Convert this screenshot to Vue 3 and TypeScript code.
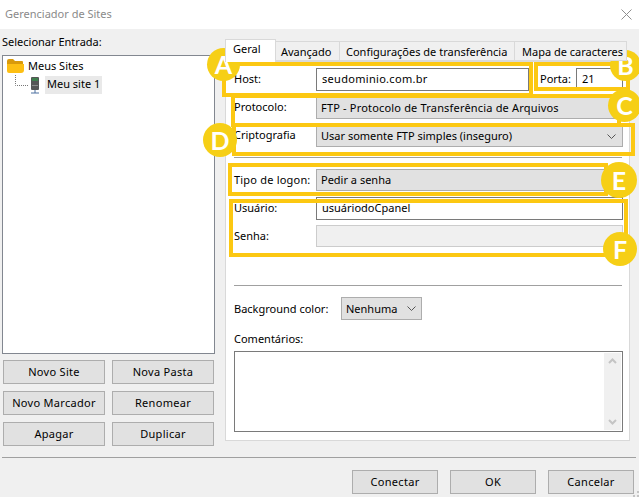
<script setup lang="ts">
const leftButtons: string[] = ['Novo Site', 'Nova Pasta', 'Novo Marcador', 'Renomear', 'Apagar', 'Duplicar']
const footerButtons: string[] = ['Conectar', 'OK', 'Cancelar']
const tabs: string[] = ['Avançado', 'Configurações de transferência', 'Mapa de caracteres']
const marks: string[] = ['a', 'b', 'c', 'd', 'e', 'f']
</script>

<template>
  <div class="app">
    <header class="title">
      <span>Gerenciador de Sites</span>
      <svg class="close" width="11" height="11" viewBox="0 0 11 11"><path d="M.5.5l10 10M10.5.5l-10 10" stroke="#8f8f8f" fill="none" /></svg>
    </header>

    <main class="main">
      <section class="left">
        <div class="left-label">Selecionar Entrada:</div>
        <div class="tree">
          <div class="node root">
            <svg width="17" height="14" viewBox="0 0 17 14">
              <path d="M0 2Q0 0 2 0H6L8 2H15Q16 2 16 3V5H0Z" fill="#d99a0b" />
              <path d="M0 5H17V11Q17 14 14 14H2Q0 14 0 12Z" fill="#fdbf13" />
            </svg>
            <span>Meus Sites</span>
          </div>
          <div class="node child">
            <svg class="dots" width="14" height="11" viewBox="0 0 14 11">
              <path d="M.5 0V10.5H14" stroke="#777" stroke-dasharray="1 1" fill="none" />
            </svg>
            <svg class="server" width="10" height="17" viewBox="0 0 10 17">
              <rect x="1" y="0" width="8" height="13" rx="1" fill="#555" />
              <rect x="2" y="1" width="6" height="3" fill="#3f7f4e" />
              <rect x="2" y="8" width="6" height="1" fill="#8a8a8a" />
              <path d="M5 13V16M1 16H9" stroke="#4a6f9f" fill="none" />
            </svg>
            <span class="selected">Meu site 1</span>
          </div>
        </div>
        <div class="left-buttons">
          <button v-for="b in leftButtons" :key="b" class="btn">{{ b }}</button>
        </div>
      </section>

      <section class="right">
        <div class="tabs">
          <div class="tab active">Geral</div>
          <div v-for="t in tabs" :key="t" class="tab">{{ t }}</div>
        </div>
        <div class="panel">
          <div class="row r1">
            <label class="lab up">Host:</label>
            <div class="field host">seudominio.com.br</div>
            <label class="port-lab up">Porta:</label>
            <div class="field port">21</div>
          </div>
          <div class="row r2">
            <label class="lab up">Protocolo:</label>
            <div class="select grow proto">FTP - Protocolo de Transferência de Arquivos</div>
          </div>
          <div class="row r3">
            <label class="lab up">Criptografia</label>
            <div class="select grow">
              Usar somente FTP simples (inseguro)
              <svg class="chev" width="9" height="5" viewBox="0 0 9 5"><path d="M.5.5l4 4 4-4" stroke="#555" fill="none" /></svg>
            </div>
          </div>
          <div class="sep s1"></div>
          <div class="row r4">
            <label class="lab tipo">Tipo de logon:</label>
            <div class="select grow">Pedir a senha</div>
          </div>
          <div class="row r5">
            <label class="lab up">Usuário:</label>
            <div class="field grow user">usuáriodoCpanel</div>
          </div>
          <div class="row r6">
            <label class="lab">Senha:</label>
            <div class="field grow disabled"></div>
          </div>
          <div class="sep s2"></div>
          <div class="row r7">
            <label class="bg-lab">Background color:</label>
            <div class="select bg-sel">
              Nenhuma
              <svg class="chev" width="9" height="5" viewBox="0 0 9 5"><path d="M.5.5l4 4 4-4" stroke="#555" fill="none" /></svg>
            </div>
          </div>
          <div class="comment-lab">Comentários:</div>
          <div class="textarea">
            <div class="scroll">
              <svg width="9" height="6" viewBox="0 0 9 6"><path d="M1 5l3.5-3.5L8 5" stroke="#c4c4c4" stroke-width="2" fill="none" /></svg>
              <svg width="9" height="6" viewBox="0 0 9 6"><path d="M1 1l3.5 3.5L8 1" stroke="#c4c4c4" stroke-width="2" fill="none" /></svg>
            </div>
          </div>
        </div>
      </section>
    </main>

    <footer class="footer">
      <div class="footer-row">
        <button v-for="b in footerButtons" :key="b" class="btn fbtn">{{ b }}</button>
      </div>
    </footer>

    <div class="box box-a"></div>
    <div class="box box-b"></div>
    <div class="box box-c"></div>
    <div class="box box-d"></div>
    <div class="box box-e"></div>
    <div class="box box-f"></div>
    <div v-for="m in marks" :key="m" class="mark" :class="'mark-' + m">{{ m.toUpperCase() }}</div>
    <svg class="grip" width="6" height="6" viewBox="0 0 6 6"><path d="M4 0h2v2H4zM0 4h2v2H0zM4 4h2v2H4z" fill="#c4c4c4" /></svg>
  </div>
</template>

<style>
html, body { margin: 0; background: #f0f0f0; }
</style>

<style scoped>
.app {
  position: relative;
  width: 639px;
  height: 497px;
  overflow: hidden;
  background: #f0f0f0;
  color: #000;
  font-family: "Noto Sans", "Open Sans", sans-serif;
  font-size: 11px;
  line-height: 16px;
  display: flex;
  flex-direction: column;
}
.title {
  height: 29px;
  flex: none;
  background: #fff;
  color: #8a8a8a;
  display: flex;
  align-items: center;
  justify-content: space-between;
  padding: 0 7px 2px 5px;
  box-sizing: border-box;
}
.close { margin-top: 1px; }
.main { height: 428px; flex: none; display: flex; }
.left { width: 213px; margin-left: 2px; flex: none; }
.left-label { height: 26px; display: flex; align-items: center; }
.tree {
  height: 299px;
  box-sizing: border-box;
  border: 1px solid #828790;
  background: #fff;
  padding-top: 1px;
}
.node { display: flex; align-items: center; height: 18px; }
.root { padding-left: 4px; gap: 4px; margin-bottom: 1px; }
.child { padding-left: 12px; }
.dots { margin-top: -9px; }
.server { margin-left: 1px; margin-right: 5px; }
.selected { background: #e9e9e9; padding: 0 2px 2px; }
.left-buttons {
  display: grid;
  grid-template-columns: 102px 102px;
  grid-auto-rows: 24px;
  gap: 7px;
  margin: 6px 0 0 1px;
}
.btn {
  font: inherit;
  letter-spacing: 0.3px;
  color: #000;
  background: #e1e1e1;
  border: 1px solid #adadad;
  padding: 0;
  margin: 0;
  box-sizing: border-box;
  white-space: nowrap;
}
.right { margin-left: 10px; width: 405px; flex: none; padding-top: 10px; }
.tabs { display: flex; align-items: flex-end; height: 22px; position: relative; z-index: 1; }
.tab {
  height: 20px;
  box-sizing: border-box;
  background: #f0f0f0;
  border: 1px solid #d9d9d9;
  border-left: 0;
  padding: 0 6px;
  white-space: nowrap;
  line-height: 19px;
}
.tab:nth-child(2) { width: 64px; padding-left: 5px; }
.tab:nth-child(3) { width: 175px; }
.tab:nth-child(4) { width: 112px; padding-left: 7px; overflow: hidden; }
.tab.active {
  width: 51px;
  height: 23px;
  margin-bottom: -1px;
  background: #fff;
  border-left: 1px solid #d9d9d9;
  border-bottom: 0;
  padding-left: 7px;
  line-height: 18px;
}
.panel {
  height: 380px;
  box-sizing: border-box;
  background: #fff;
  border: 1px solid #d9d9d9;
  padding: 0 6px 0 8px;
  display: flex;
  flex-direction: column;
}
.row { display: flex; align-items: center; }
.lab { width: 82px; flex: none; }
.up { padding-bottom: 2px; }
.tipo { letter-spacing: 0.2px; }
.grow { flex: 1; }
.field {
  box-sizing: border-box;
  height: 100%;
  background: #fff;
  border: 1px solid #7a7a7a;
  padding-left: 5px;
  display: flex;
  align-items: center;
}
.select {
  box-sizing: border-box;
  height: 100%;
  background: #e1e1e1;
  border: 1px solid #adadad;
  padding: 0 4px;
  display: flex;
  align-items: center;
  justify-content: space-between;
}
.r1 { height: 23px; margin-top: 6px; }
.host { width: 213px; flex: none; letter-spacing: 0.3px; padding-bottom: 2px; }
.user { padding-bottom: 2px; }
.proto { letter-spacing: 0.18px; }
.port-lab { margin-left: 11px; width: 36px; flex: none; }
.port { width: 47px; flex: none; padding-bottom: 2px; }
.r2 { height: 22px; margin-top: 6px; }
.r3 { height: 22px; margin-top: 6px; }
.sep { height: 1px; background: #a0a0a0; flex: none; margin-right: 1px; }
.s1 { margin-top: 10px; }
.r4 { height: 22px; margin-top: 11px; }
.r5 { height: 23px; margin-top: 6px; }
.r6 { height: 22px; margin-top: 5px; }
.disabled { background: #f0f0f0; border-color: #ccc; }
.s2 { margin-top: 38px; }
.r7 { height: 23px; margin-top: 11px; }
.bg-lab { width: 107px; flex: none; }
.bg-sel { width: 81px; flex: none; }
.chev { margin-right: 1px; flex: none; }
.r3 .chev { margin-right: 2px; }
.comment-lab { margin-top: 11px; height: 16px; }
.textarea {
  height: 81px;
  margin-top: 4px;
  flex: none;
  box-sizing: border-box;
  background: #fff;
  border: 1px solid #7a7a7a;
  display: flex;
  justify-content: flex-end;
  padding: 1px;
}
.scroll {
  width: 17px;
  background: #f0f0f0;
  display: flex;
  flex-direction: column;
  align-items: center;
  justify-content: space-between;
  padding: 5px 0;
  box-sizing: border-box;
}
.footer { flex: 1; padding: 0 3px 0 2px; }
.footer-row {
  border-top: 1px solid #a0a0a0;
  padding: 12px 2px 0 0;
  display: flex;
  justify-content: flex-end;
  gap: 12px;
}
.fbtn { width: 86px; height: 24px; }
.box { position: absolute; box-sizing: border-box; border: 4px solid #fcc812; }
.box-a { left: 222px; top: 62px; width: 311px; height: 35px; }
.box-b { left: 534px; top: 62px; width: 96px; height: 29px; }
.box-c { left: 231px; top: 94px; width: 390px; height: 33px; }
.box-d { left: 232px; top: 123px; width: 403px; height: 33px; }
.box-e { left: 228px; top: 163px; width: 380px; height: 33px; }
.box-f { left: 229px; top: 199px; width: 399px; height: 58px; }
.mark {
  position: absolute;
  border-radius: 50%;
  background: #f6cf16;
  color: #fff;
  font-family: "Lato", sans-serif;
  font-weight: 700;
  font-size: 25px;
  line-height: 1;
  display: flex;
  align-items: center;
  justify-content: center;
}
.mark-a { left: 207px; top: 48px; width: 33px; height: 33px; }
.mark-b { left: 610px; top: 50px; width: 31px; height: 31px; }
.mark-c { left: 608px; top: 89px; width: 33px; height: 33px; }
.mark-d { left: 203px; top: 123px; width: 34px; height: 34px; }
.mark-e { left: 601px; top: 162px; width: 36px; height: 36px; }
.mark-f { left: 603px; top: 232px; width: 34px; height: 34px; }
.grip { position: absolute; right: 0; bottom: 0; }
</style>
